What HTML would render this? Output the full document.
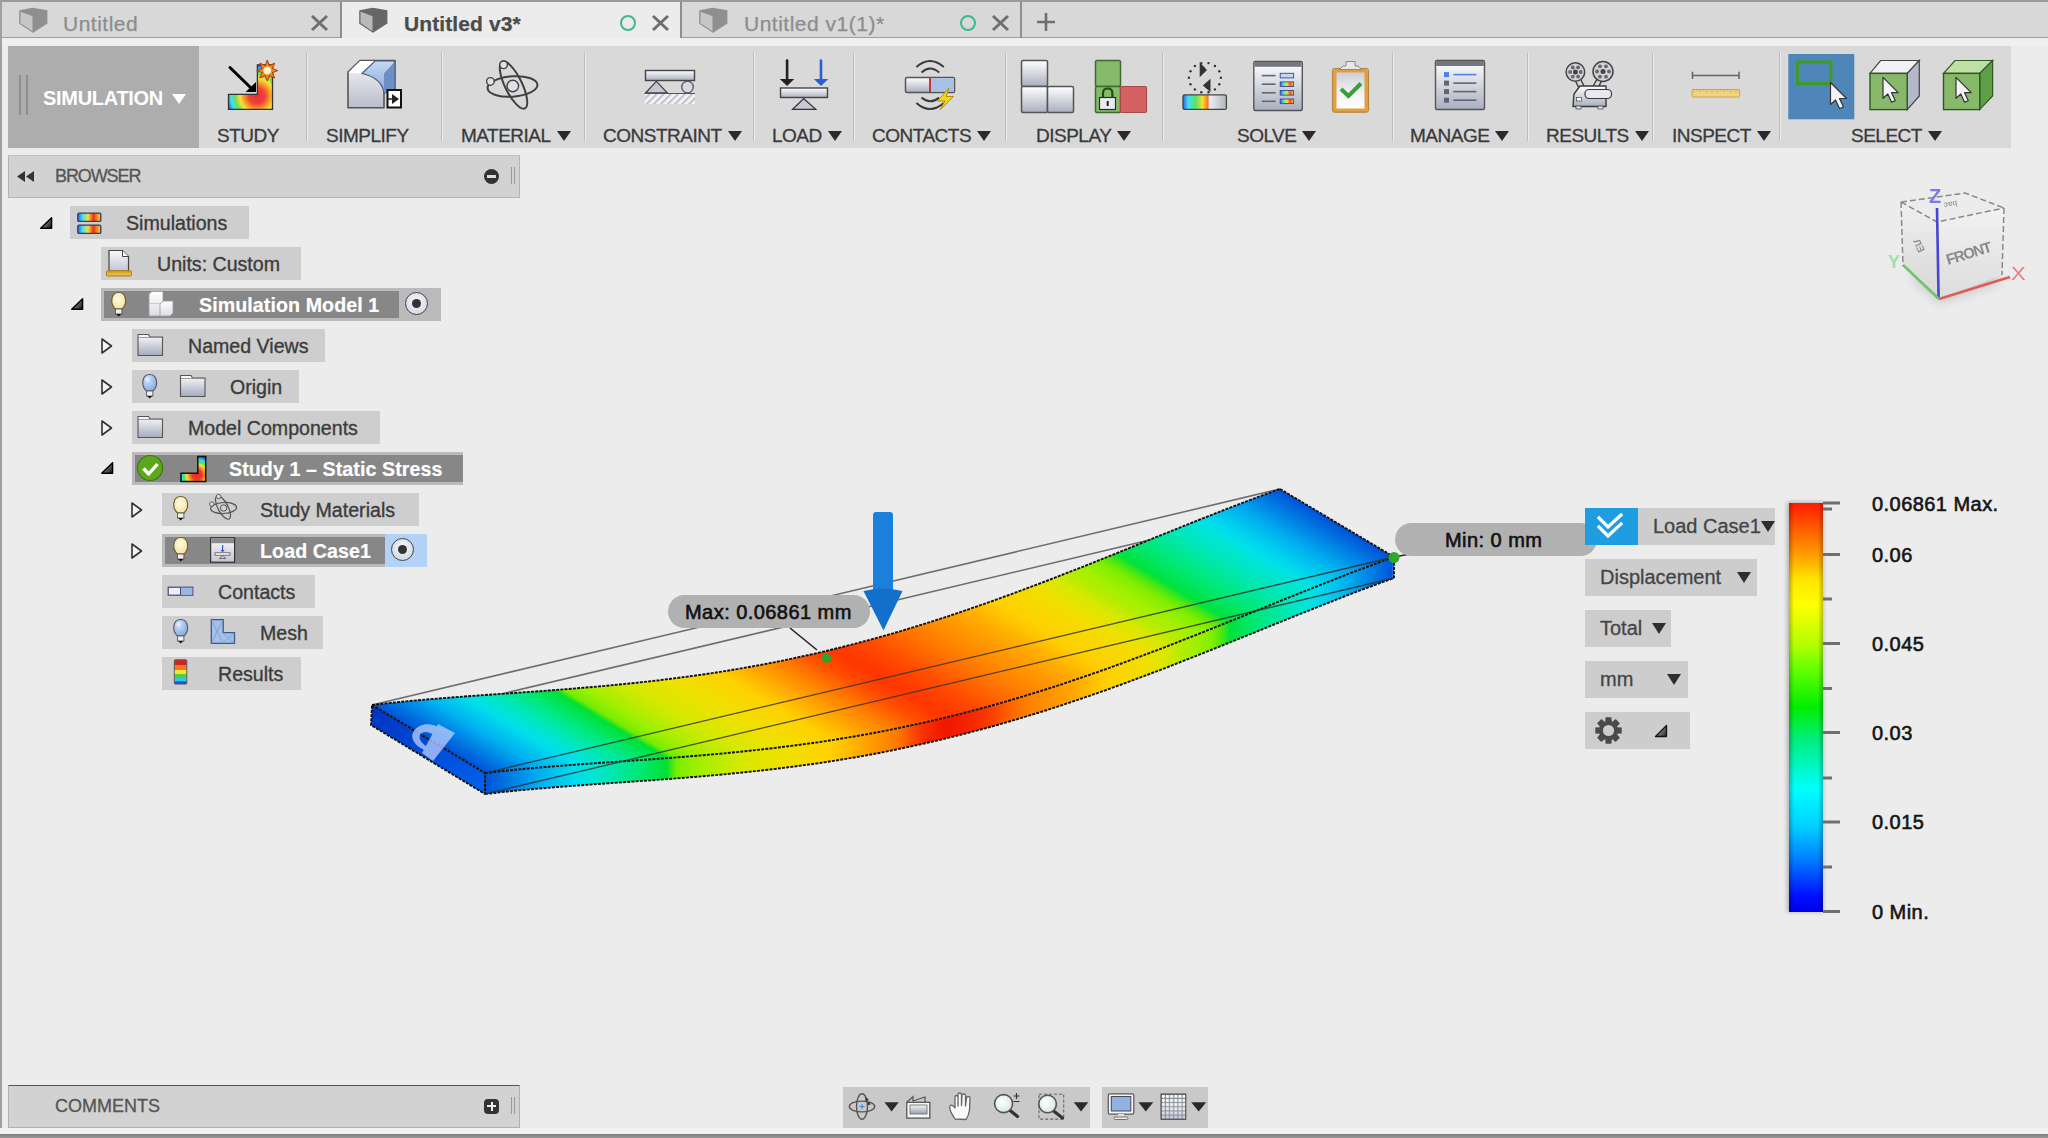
<!DOCTYPE html>
<html><head><meta charset="utf-8"><title>Fusion</title>
<style>
*{margin:0;padding:0;box-sizing:border-box}
html,body{width:2048px;height:1138px;overflow:hidden;background:#ececec;font-family:"Liberation Sans",sans-serif;position:relative}
.a{position:absolute}
svg{position:absolute;overflow:visible}

.tab{position:absolute;top:2px;height:36px;background:#d8d8d8;border-bottom:1px solid #9d9d9d}
.tabt{position:absolute;top:12px;font-size:21px;line-height:24px;color:#8d8d8d;letter-spacing:0.5px;white-space:nowrap;-webkit-text-stroke:0.25px currentColor}
.tl{position:absolute;top:119px;font-size:19px;color:#3a3a3a;white-space:nowrap;letter-spacing:-0.5px;line-height:34px;-webkit-text-stroke:0.3px #3a3a3a}
.sep{position:absolute;top:53px;width:2px;height:88px;background:linear-gradient(90deg,#bcbcbc 50%,#ececec 50%)}
.dd{display:inline-block;width:0;height:0;border-left:7px solid transparent;border-right:7px solid transparent;border-top:10px solid #2a2a2a;margin-left:6px;vertical-align:1px}


.row{position:absolute;height:33px;background:#cecece}
.rt{position:absolute;font-size:19.6px;color:#3c3c3c;white-space:nowrap;line-height:24px;-webkit-text-stroke:0.35px #3c3c3c}
.sel{background:#bababa}
.seli{position:absolute;top:3px;left:3px;height:27px;background:#878787}
.wt{color:#fff;font-weight:bold;-webkit-text-stroke:0.2px #fff;letter-spacing:0.1px}


.btn{position:absolute;background:#cdcdcd;height:37px}
.bt{position:absolute;font-size:20px;color:#454545;white-space:nowrap;line-height:24px;-webkit-text-stroke:0.3px #454545}
.tri{position:absolute;width:0;height:0;border-left:7px solid transparent;border-right:7px solid transparent;border-top:11px solid #2e2e2e}
.lg{position:absolute;font-size:20px;font-weight:normal;color:#151515;white-space:nowrap;line-height:24px;letter-spacing:0.45px;-webkit-text-stroke:0.6px #151515}

</style></head><body>
<div class="a" style="left:0;top:0;width:2048px;height:2px;background:#9a9a9a"></div>
<div class="a" style="left:0;top:2px;width:2048px;height:36px;background:#d8d8d8;border-bottom:1px solid #9d9d9d"></div>
<div class="a" style="left:0;top:0;width:2px;height:1138px;background:#a0a0a0"></div>
<div class="a" style="left:342px;top:2px;width:338px;height:36px;background:#ececec"></div>
<div class="a" style="left:340px;top:2px;width:2px;height:36px;background:#8e8e8e"></div>
<div class="a" style="left:680px;top:2px;width:2px;height:36px;background:#8e8e8e"></div>
<div class="a" style="left:1020px;top:2px;width:2px;height:36px;background:#8e8e8e"></div>
<div class="tabt" style="left:63px">Untitled</div>
<div class="tabt" style="left:404px;color:#4b4b4b;font-weight:bold;letter-spacing:0.1px">Untitled v3*</div>
<div class="tabt" style="left:744px">Untitled v1(1)*</div>
<div class="a" style="left:2px;top:38px;width:2046px;height:8px;background:#efefef"></div>
<div class="a" style="left:8px;top:46px;width:2003px;height:102px;background:#d9d9d9"></div>
<div class="a" style="left:8px;top:46px;width:191px;height:102px;background:#adadad"></div>
<div class="a" style="left:19px;top:75px;width:2px;height:40px;background:#8e8e8e"></div>
<div class="a" style="left:26px;top:75px;width:2px;height:40px;background:#8e8e8e"></div>
<div class="a" style="left:43px;top:81px;font-size:20px;font-weight:bold;color:#fff;letter-spacing:-0.3px;line-height:34px">SIMULATION</div><div class="a" style="left:172px;top:94px;width:0;height:0;border-left:7.5px solid transparent;border-right:7.5px solid transparent;border-top:10px solid #fff"></div>
<div class="tl" style="left:217px">STUDY</div>
<div class="tl" style="left:326px">SIMPLIFY</div>
<div class="tl" style="left:461px">MATERIAL<span class="dd"></span></div>
<div class="tl" style="left:603px">CONSTRAINT<span class="dd"></span></div>
<div class="tl" style="left:772px">LOAD<span class="dd"></span></div>
<div class="tl" style="left:872px">CONTACTS<span class="dd"></span></div>
<div class="tl" style="left:1036px">DISPLAY<span class="dd"></span></div>
<div class="tl" style="left:1237px">SOLVE<span class="dd"></span></div>
<div class="tl" style="left:1410px">MANAGE<span class="dd"></span></div>
<div class="tl" style="left:1546px">RESULTS<span class="dd"></span></div>
<div class="tl" style="left:1672px">INSPECT<span class="dd"></span></div>
<div class="tl" style="left:1851px">SELECT<span class="dd"></span></div>
<div class="sep" style="left:306px"></div>
<div class="sep" style="left:441px"></div>
<div class="sep" style="left:584px"></div>
<div class="sep" style="left:753px"></div>
<div class="sep" style="left:853px"></div>
<div class="sep" style="left:1005px"></div>
<div class="sep" style="left:1162px"></div>
<div class="sep" style="left:1392px"></div>
<div class="sep" style="left:1527px"></div>
<div class="sep" style="left:1652px"></div>
<div class="sep" style="left:1779px"></div>
<svg style="left:0;top:0" width="1100" height="40"><polygon points="19.4,10.3 32.7,7.7 47.4,10.3 47.4,23.4 33.0,32.7 19.4,23.7" fill="#8f8f8f"/><polygon points="20.0,11.0 33.0,15.8 33.0,32.0 20.0,23.4" fill="#c6c6c6" stroke="#8f8f8f" stroke-width="1"/></svg>
<svg style="left:0;top:0" width="1100" height="40"><polygon points="359.4,10.3 372.7,7.7 387.4,10.3 387.4,23.4 373.0,32.7 359.4,23.7" fill="#666"/><polygon points="360.0,11.0 373.0,15.8 373.0,32.0 360.0,23.4" fill="#b9b9b9" stroke="#666" stroke-width="1"/></svg>
<svg style="left:0;top:0" width="1100" height="40"><polygon points="699.4,10.3 712.7,7.7 727.4,10.3 727.4,23.4 713.0,32.7 699.4,23.7" fill="#8f8f8f"/><polygon points="700.0,11.0 713.0,15.8 713.0,32.0 700.0,23.4" fill="#c6c6c6" stroke="#8f8f8f" stroke-width="1"/></svg>
<svg style="left:310px;top:14px" width="20" height="18"><path d="M2 2 L17 16 M17 2 L2 16" stroke="#6f6f6f" stroke-width="3"/></svg>
<svg style="left:651px;top:14px" width="20" height="18"><path d="M2 2 L17 16 M17 2 L2 16" stroke="#6f6f6f" stroke-width="3"/></svg>
<svg style="left:991px;top:14px" width="20" height="18"><path d="M2 2 L17 16 M17 2 L2 16" stroke="#6f6f6f" stroke-width="3"/></svg>
<div class="a" style="left:620px;top:15px;width:16px;height:16px;border-radius:50%;border:2px solid #3cb88e"></div>
<div class="a" style="left:960px;top:15px;width:16px;height:16px;border-radius:50%;border:2px solid #3cb88e"></div>
<svg style="left:1036px;top:12px" width="20" height="20"><path d="M10 1 V19 M1 10 H19" stroke="#6f6f6f" stroke-width="2.6"/></svg>
<div class="a" style="left:8px;top:155px;width:512px;height:43px;background:#d2d2d2;border:1px solid #b4b4b4;border-top-color:#c0c0c0"></div>
<div class="a" style="left:55px;top:164px;font-size:18px;color:#555;letter-spacing:-1.1px;line-height:24px;-webkit-text-stroke:0.3px #555">BROWSER</div>
<svg style="left:17px;top:171px" width="18" height="11"><path d="M0 5.5 L8 0 L8 11 Z M9 5.5 L17 0 L17 11Z" fill="#333"/></svg>
<div class="a" style="left:484px;top:169px;width:15px;height:15px;border-radius:50%;background:#333"></div><div class="a" style="left:487px;top:175px;width:9px;height:3px;background:#ddd"></div>
<div class="a" style="left:511px;top:167px;width:1px;height:17px;background:#999"></div><div class="a" style="left:514px;top:167px;width:1px;height:17px;background:#999"></div>
<div class="row" style="left:70px;top:206px;width:179px"></div>
<div class="rt" style="left:126px;top:211px">Simulations</div>
<div class="row" style="left:101px;top:247px;width:200px"></div>
<div class="rt" style="left:157px;top:252px">Units: Custom</div>
<div class="row sel" style="left:101px;top:288px;width:340px"><div class="seli" style="width:295px"></div></div>
<div class="rt wt" style="left:199px;top:293px">Simulation Model 1</div>
<div class="row" style="left:132px;top:329px;width:193px"></div>
<div class="rt" style="left:188px;top:334px">Named Views</div>
<div class="row" style="left:132px;top:370px;width:167px"></div>
<div class="rt" style="left:230px;top:375px">Origin</div>
<div class="row" style="left:132px;top:411px;width:248px"></div>
<div class="rt" style="left:188px;top:416px">Model Components</div>
<div class="row sel" style="left:132px;top:452px;width:331px"><div class="seli" style="width:328px"></div></div>
<div class="rt wt" style="left:229px;top:457px">Study 1 &#8211; Static Stress</div>
<div class="row" style="left:162px;top:493px;width:257px"></div>
<div class="rt" style="left:260px;top:498px">Study Materials</div>
<div class="row sel" style="left:162px;top:534px;width:265px"><div class="seli" style="width:220px"></div></div>
<div class="rt wt" style="left:260px;top:539px">Load Case1</div>
<div class="row" style="left:162px;top:575px;width:153px"></div>
<div class="rt" style="left:218px;top:580px">Contacts</div>
<div class="row" style="left:162px;top:616px;width:161px"></div>
<div class="rt" style="left:260px;top:621px">Mesh</div>
<div class="row" style="left:162px;top:657px;width:139px"></div>
<div class="rt" style="left:218px;top:662px">Results</div>
<div class="a" style="left:385px;top:534px;width:42px;height:33px;background:#b2d3f7"></div>
<svg style="left:40px;top:217px" width="13" height="12"><defs><linearGradient id="tg40217" x1="0" y1="0.3" x2="1" y2="1"><stop offset="0" stop-color="#aaa"/><stop offset="1" stop-color="#111"/></linearGradient></defs><path d="M11.6 0.7 L11.6 11.3 L0.7 11.3 Z" fill="url(#tg40217)" stroke="#000" stroke-width="1.4" stroke-linejoin="round"/></svg>
<svg style="left:71px;top:298px" width="13" height="12"><defs><linearGradient id="tg71298" x1="0" y1="0.3" x2="1" y2="1"><stop offset="0" stop-color="#aaa"/><stop offset="1" stop-color="#111"/></linearGradient></defs><path d="M11.6 0.7 L11.6 11.3 L0.7 11.3 Z" fill="url(#tg71298)" stroke="#000" stroke-width="1.4" stroke-linejoin="round"/></svg>
<svg style="left:101px;top:462px" width="13" height="12"><defs><linearGradient id="tg101462" x1="0" y1="0.3" x2="1" y2="1"><stop offset="0" stop-color="#aaa"/><stop offset="1" stop-color="#111"/></linearGradient></defs><path d="M11.6 0.7 L11.6 11.3 L0.7 11.3 Z" fill="url(#tg101462)" stroke="#000" stroke-width="1.4" stroke-linejoin="round"/></svg>
<svg style="left:101px;top:338px" width="12" height="16"><path d="M1 1 L10.5 8 L1 15 Z" fill="#f4f4f4" stroke="#333" stroke-width="1.6" stroke-linejoin="round"/></svg>
<svg style="left:101px;top:379px" width="12" height="16"><path d="M1 1 L10.5 8 L1 15 Z" fill="#f4f4f4" stroke="#333" stroke-width="1.6" stroke-linejoin="round"/></svg>
<svg style="left:101px;top:420px" width="12" height="16"><path d="M1 1 L10.5 8 L1 15 Z" fill="#f4f4f4" stroke="#333" stroke-width="1.6" stroke-linejoin="round"/></svg>
<svg style="left:131px;top:502px" width="12" height="16"><path d="M1 1 L10.5 8 L1 15 Z" fill="#f4f4f4" stroke="#333" stroke-width="1.6" stroke-linejoin="round"/></svg>
<svg style="left:131px;top:543px" width="12" height="16"><path d="M1 1 L10.5 8 L1 15 Z" fill="#f4f4f4" stroke="#333" stroke-width="1.6" stroke-linejoin="round"/></svg>
<div class="a" style="left:405px;top:292px;width:23px;height:23px;border-radius:50%;border:1.5px solid #444;background:radial-gradient(circle at 50% 40%,#fafafa,#c9cde0)"></div>
<div class="a" style="left:412px;top:299px;width:9px;height:9px;border-radius:50%;background:#333"></div>
<div class="a" style="left:391px;top:538px;width:23px;height:23px;border-radius:50%;border:1.5px solid #444;background:radial-gradient(circle at 50% 40%,#fafafa,#c9cde0)"></div>
<div class="a" style="left:398px;top:545px;width:9px;height:9px;border-radius:50%;background:#333"></div>
<div class="a" style="left:8px;top:1085px;width:512px;height:43px;background:#d2d2d2;border:1px solid #b0b0b0;border-top:1px solid #555"></div>
<div class="a" style="left:55px;top:1094px;font-size:18px;color:#555;letter-spacing:0px;line-height:24px;-webkit-text-stroke:0.3px #555">COMMENTS</div>
<div class="a" style="left:484px;top:1099px;width:15px;height:15px;border-radius:4px;background:#333"></div><div class="a" style="left:487px;top:1105px;width:9px;height:2px;background:#eee"></div><div class="a" style="left:490.5px;top:1101.5px;width:2px;height:9px;background:#eee"></div>
<div class="a" style="left:511px;top:1097px;width:1px;height:17px;background:#999"></div><div class="a" style="left:514px;top:1097px;width:1px;height:17px;background:#999"></div>
<div class="a" style="left:0;top:1128px;width:2048px;height:7px;background:#f2f2f2"></div>
<div class="a" style="left:0;top:1134px;width:2048px;height:4px;background:linear-gradient(#7b7b7b,#9a9a9a)"></div>
<svg style="left:0;top:0" width="2048" height="1138" viewBox="0 0 2048 1138"><defs><linearGradient id="gt" gradientUnits="userSpaceOnUse" x1="372.0" y1="705.0" x2="708.8" y2="145.3"><stop offset="0.0000" stop-color="rgb(0,80,216)"/><stop offset="0.0085" stop-color="rgb(0,96,220)"/><stop offset="0.0170" stop-color="rgb(0,112,224)"/><stop offset="0.0254" stop-color="rgb(0,127,228)"/><stop offset="0.0337" stop-color="rgb(0,143,232)"/><stop offset="0.0420" stop-color="rgb(0,159,236)"/><stop offset="0.0502" stop-color="rgb(0,175,240)"/><stop offset="0.0584" stop-color="rgb(0,187,239)"/><stop offset="0.0665" stop-color="rgb(0,199,238)"/><stop offset="0.0746" stop-color="rgb(0,210,237)"/><stop offset="0.0827" stop-color="rgb(0,222,236)"/><stop offset="0.0907" stop-color="rgb(0,226,224)"/><stop offset="0.0987" stop-color="rgb(0,229,209)"/><stop offset="0.1067" stop-color="rgb(0,231,195)"/><stop offset="0.1147" stop-color="rgb(0,232,176)"/><stop offset="0.1227" stop-color="rgb(0,232,156)"/><stop offset="0.1307" stop-color="rgb(0,232,137)"/><stop offset="0.1387" stop-color="rgb(0,232,117)"/><stop offset="0.1467" stop-color="rgb(0,230,95)"/><stop offset="0.1548" stop-color="rgb(0,227,73)"/><stop offset="0.1628" stop-color="rgb(0,224,50)"/><stop offset="0.1709" stop-color="rgb(117,236,0)"/><stop offset="0.1790" stop-color="rgb(135,238,0)"/><stop offset="0.1871" stop-color="rgb(153,239,0)"/><stop offset="0.1953" stop-color="rgb(167,239,0)"/><stop offset="0.2035" stop-color="rgb(178,237,0)"/><stop offset="0.2118" stop-color="rgb(190,236,0)"/><stop offset="0.2201" stop-color="rgb(201,234,0)"/><stop offset="0.2284" stop-color="rgb(212,233,0)"/><stop offset="0.2368" stop-color="rgb(219,231,0)"/><stop offset="0.2453" stop-color="rgb(224,229,0)"/><stop offset="0.2538" stop-color="rgb(229,228,0)"/><stop offset="0.2623" stop-color="rgb(234,226,0)"/><stop offset="0.2710" stop-color="rgb(239,224,0)"/><stop offset="0.2797" stop-color="rgb(242,222,0)"/><stop offset="0.2884" stop-color="rgb(245,218,0)"/><stop offset="0.2973" stop-color="rgb(248,215,0)"/><stop offset="0.3062" stop-color="rgb(251,212,0)"/><stop offset="0.3152" stop-color="rgb(254,209,0)"/><stop offset="0.3242" stop-color="rgb(255,198,0)"/><stop offset="0.3334" stop-color="rgb(255,186,0)"/><stop offset="0.3426" stop-color="rgb(255,174,0)"/><stop offset="0.3519" stop-color="rgb(255,162,0)"/><stop offset="0.3612" stop-color="rgb(255,150,0)"/><stop offset="0.3707" stop-color="rgb(255,138,0)"/><stop offset="0.3802" stop-color="rgb(255,125,0)"/><stop offset="0.3899" stop-color="rgb(255,110,0)"/><stop offset="0.3996" stop-color="rgb(255,95,0)"/><stop offset="0.4093" stop-color="rgb(255,79,0)"/><stop offset="0.4192" stop-color="rgb(255,69,0)"/><stop offset="0.4292" stop-color="rgb(255,59,0)"/><stop offset="0.4392" stop-color="rgb(255,54,0)"/><stop offset="0.4493" stop-color="rgb(255,60,0)"/><stop offset="0.4596" stop-color="rgb(255,66,0)"/><stop offset="0.4699" stop-color="rgb(255,72,0)"/><stop offset="0.4802" stop-color="rgb(255,80,0)"/><stop offset="0.4907" stop-color="rgb(255,90,0)"/><stop offset="0.5012" stop-color="rgb(255,100,0)"/><stop offset="0.5119" stop-color="rgb(255,110,0)"/><stop offset="0.5226" stop-color="rgb(255,120,0)"/><stop offset="0.5334" stop-color="rgb(255,129,0)"/><stop offset="0.5442" stop-color="rgb(255,137,0)"/><stop offset="0.5552" stop-color="rgb(255,145,0)"/><stop offset="0.5662" stop-color="rgb(255,153,0)"/><stop offset="0.5773" stop-color="rgb(255,161,0)"/><stop offset="0.5884" stop-color="rgb(255,170,0)"/><stop offset="0.5997" stop-color="rgb(255,181,0)"/><stop offset="0.6110" stop-color="rgb(255,193,0)"/><stop offset="0.6223" stop-color="rgb(255,205,0)"/><stop offset="0.6338" stop-color="rgb(253,210,0)"/><stop offset="0.6453" stop-color="rgb(250,213,0)"/><stop offset="0.6568" stop-color="rgb(247,217,0)"/><stop offset="0.6684" stop-color="rgb(244,220,0)"/><stop offset="0.6801" stop-color="rgb(237,225,0)"/><stop offset="0.6918" stop-color="rgb(226,229,0)"/><stop offset="0.7035" stop-color="rgb(216,232,0)"/><stop offset="0.7153" stop-color="rgb(192,235,0)"/><stop offset="0.7271" stop-color="rgb(175,238,0)"/><stop offset="0.7390" stop-color="rgb(163,240,0)"/><stop offset="0.7509" stop-color="rgb(146,239,0)"/><stop offset="0.7628" stop-color="rgb(127,237,0)"/><stop offset="0.7748" stop-color="rgb(75,232,16)"/><stop offset="0.7867" stop-color="rgb(0,226,60)"/><stop offset="0.7987" stop-color="rgb(0,228,82)"/><stop offset="0.8107" stop-color="rgb(0,231,103)"/><stop offset="0.8227" stop-color="rgb(0,232,123)"/><stop offset="0.8347" stop-color="rgb(0,232,142)"/><stop offset="0.8467" stop-color="rgb(0,232,161)"/><stop offset="0.8587" stop-color="rgb(0,232,179)"/><stop offset="0.8707" stop-color="rgb(0,231,197)"/><stop offset="0.8827" stop-color="rgb(0,229,210)"/><stop offset="0.8946" stop-color="rgb(0,226,228)"/><stop offset="0.9065" stop-color="rgb(0,217,237)"/><stop offset="0.9184" stop-color="rgb(0,203,238)"/><stop offset="0.9302" stop-color="rgb(0,189,239)"/><stop offset="0.9420" stop-color="rgb(0,174,240)"/><stop offset="0.9537" stop-color="rgb(0,155,235)"/><stop offset="0.9654" stop-color="rgb(0,136,230)"/><stop offset="0.9770" stop-color="rgb(0,118,225)"/><stop offset="0.9885" stop-color="rgb(0,99,221)"/><stop offset="1.0000" stop-color="rgb(0,80,216)"/></linearGradient><linearGradient id="gf" gradientUnits="userSpaceOnUse" x1="485" y1="0" x2="1394" y2="0"><stop offset="0.0000" stop-color="rgb(0,80,216)"/><stop offset="0.0100" stop-color="rgb(0,96,220)"/><stop offset="0.0200" stop-color="rgb(0,112,224)"/><stop offset="0.0300" stop-color="rgb(0,127,228)"/><stop offset="0.0400" stop-color="rgb(0,143,232)"/><stop offset="0.0500" stop-color="rgb(0,159,236)"/><stop offset="0.0600" stop-color="rgb(0,175,240)"/><stop offset="0.0700" stop-color="rgb(0,187,239)"/><stop offset="0.0800" stop-color="rgb(0,199,238)"/><stop offset="0.0900" stop-color="rgb(0,210,237)"/><stop offset="0.1000" stop-color="rgb(0,222,236)"/><stop offset="0.1100" stop-color="rgb(0,226,224)"/><stop offset="0.1200" stop-color="rgb(0,229,209)"/><stop offset="0.1300" stop-color="rgb(0,231,195)"/><stop offset="0.1400" stop-color="rgb(0,232,176)"/><stop offset="0.1500" stop-color="rgb(0,232,156)"/><stop offset="0.1600" stop-color="rgb(0,232,137)"/><stop offset="0.1700" stop-color="rgb(0,232,117)"/><stop offset="0.1800" stop-color="rgb(0,230,95)"/><stop offset="0.1900" stop-color="rgb(0,227,73)"/><stop offset="0.2000" stop-color="rgb(0,224,50)"/><stop offset="0.2100" stop-color="rgb(117,236,0)"/><stop offset="0.2200" stop-color="rgb(135,238,0)"/><stop offset="0.2300" stop-color="rgb(153,239,0)"/><stop offset="0.2400" stop-color="rgb(167,239,0)"/><stop offset="0.2500" stop-color="rgb(178,237,0)"/><stop offset="0.2600" stop-color="rgb(190,236,0)"/><stop offset="0.2700" stop-color="rgb(201,234,0)"/><stop offset="0.2800" stop-color="rgb(212,233,0)"/><stop offset="0.2900" stop-color="rgb(219,231,0)"/><stop offset="0.3000" stop-color="rgb(224,229,0)"/><stop offset="0.3100" stop-color="rgb(229,228,0)"/><stop offset="0.3200" stop-color="rgb(234,226,0)"/><stop offset="0.3300" stop-color="rgb(239,224,0)"/><stop offset="0.3400" stop-color="rgb(242,222,0)"/><stop offset="0.3500" stop-color="rgb(245,218,0)"/><stop offset="0.3600" stop-color="rgb(248,215,0)"/><stop offset="0.3700" stop-color="rgb(251,212,0)"/><stop offset="0.3800" stop-color="rgb(254,209,0)"/><stop offset="0.3900" stop-color="rgb(255,198,0)"/><stop offset="0.4000" stop-color="rgb(255,186,0)"/><stop offset="0.4100" stop-color="rgb(255,174,0)"/><stop offset="0.4200" stop-color="rgb(255,162,0)"/><stop offset="0.4300" stop-color="rgb(255,150,0)"/><stop offset="0.4400" stop-color="rgb(255,138,0)"/><stop offset="0.4500" stop-color="rgb(255,125,0)"/><stop offset="0.4600" stop-color="rgb(254,104,0)"/><stop offset="0.4700" stop-color="rgb(251,76,0)"/><stop offset="0.4800" stop-color="rgb(248,53,0)"/><stop offset="0.4900" stop-color="rgb(245,39,0)"/><stop offset="0.5000" stop-color="rgb(242,29,0)"/><stop offset="0.5100" stop-color="rgb(240,24,0)"/><stop offset="0.5200" stop-color="rgb(242,29,0)"/><stop offset="0.5300" stop-color="rgb(244,36,0)"/><stop offset="0.5400" stop-color="rgb(246,44,0)"/><stop offset="0.5500" stop-color="rgb(248,54,0)"/><stop offset="0.5600" stop-color="rgb(250,68,0)"/><stop offset="0.5700" stop-color="rgb(252,85,0)"/><stop offset="0.5800" stop-color="rgb(253,104,0)"/><stop offset="0.5900" stop-color="rgb(255,120,0)"/><stop offset="0.6000" stop-color="rgb(255,129,0)"/><stop offset="0.6100" stop-color="rgb(255,137,0)"/><stop offset="0.6200" stop-color="rgb(255,145,0)"/><stop offset="0.6300" stop-color="rgb(255,153,0)"/><stop offset="0.6400" stop-color="rgb(255,161,0)"/><stop offset="0.6500" stop-color="rgb(255,170,0)"/><stop offset="0.6600" stop-color="rgb(255,181,0)"/><stop offset="0.6700" stop-color="rgb(255,193,0)"/><stop offset="0.6800" stop-color="rgb(255,205,0)"/><stop offset="0.6900" stop-color="rgb(253,210,0)"/><stop offset="0.7000" stop-color="rgb(250,213,0)"/><stop offset="0.7100" stop-color="rgb(247,217,0)"/><stop offset="0.7200" stop-color="rgb(244,220,0)"/><stop offset="0.7300" stop-color="rgb(237,225,0)"/><stop offset="0.7400" stop-color="rgb(226,229,0)"/><stop offset="0.7500" stop-color="rgb(216,232,0)"/><stop offset="0.7600" stop-color="rgb(192,235,0)"/><stop offset="0.7700" stop-color="rgb(175,238,0)"/><stop offset="0.7800" stop-color="rgb(163,240,0)"/><stop offset="0.7900" stop-color="rgb(146,239,0)"/><stop offset="0.8000" stop-color="rgb(127,237,0)"/><stop offset="0.8100" stop-color="rgb(75,232,16)"/><stop offset="0.8200" stop-color="rgb(0,226,60)"/><stop offset="0.8300" stop-color="rgb(0,228,82)"/><stop offset="0.8400" stop-color="rgb(0,231,103)"/><stop offset="0.8500" stop-color="rgb(0,232,123)"/><stop offset="0.8600" stop-color="rgb(0,232,142)"/><stop offset="0.8700" stop-color="rgb(0,232,161)"/><stop offset="0.8800" stop-color="rgb(0,232,179)"/><stop offset="0.8900" stop-color="rgb(0,231,197)"/><stop offset="0.9000" stop-color="rgb(0,229,210)"/><stop offset="0.9100" stop-color="rgb(0,226,228)"/><stop offset="0.9200" stop-color="rgb(0,217,237)"/><stop offset="0.9300" stop-color="rgb(0,203,238)"/><stop offset="0.9400" stop-color="rgb(0,189,239)"/><stop offset="0.9500" stop-color="rgb(0,174,240)"/><stop offset="0.9600" stop-color="rgb(0,155,235)"/><stop offset="0.9700" stop-color="rgb(0,136,230)"/><stop offset="0.9800" stop-color="rgb(0,118,225)"/><stop offset="0.9900" stop-color="rgb(0,99,221)"/><stop offset="1.0000" stop-color="rgb(0,80,216)"/></linearGradient><linearGradient id="gl" x1="0" y1="0" x2="1" y2="1"><stop offset="0" stop-color="#0034c0"/><stop offset="1" stop-color="#0062ee"/></linearGradient></defs><g stroke="#6e6e6e" stroke-width="1.6" fill="none"><path d="M372,705 L1280,489"/><path d="M371,725 L1280,509"/></g><polygon points="372.0,705.0 387.1,703.3 402.3,701.7 417.4,700.3 432.5,699.0 447.7,697.8 462.8,696.6 477.9,695.5 493.1,694.4 508.2,693.4 523.3,692.3 538.5,691.3 553.6,690.1 568.7,689.0 583.9,687.7 599.0,686.4 614.1,685.0 629.3,683.5 644.4,681.9 659.5,680.2 674.7,678.3 689.8,676.3 704.9,674.2 720.1,671.9 735.2,669.4 750.3,666.8 765.5,664.0 780.6,661.0 795.7,657.8 810.9,654.5 826.0,651.0 841.1,647.3 856.3,643.4 871.4,639.4 886.5,635.2 901.7,630.8 916.8,626.2 931.9,621.5 947.1,616.6 962.2,611.5 977.3,606.3 992.5,601.0 1007.6,595.5 1022.7,589.9 1037.9,584.2 1053.0,578.4 1068.1,572.5 1083.3,566.6 1098.4,560.5 1113.5,554.5 1128.7,548.3 1143.8,542.2 1158.9,536.0 1174.1,529.9 1189.2,523.8 1204.3,517.8 1219.5,511.8 1234.6,505.9 1249.7,500.1 1264.9,494.5 1280.0,489.0 1394.0,557.0 1378.8,562.5 1363.7,568.1 1348.5,573.9 1333.4,579.8 1318.2,585.8 1303.1,591.8 1287.9,597.9 1272.8,604.0 1257.7,610.2 1242.5,616.3 1227.3,622.5 1212.2,628.5 1197.0,634.6 1181.9,640.5 1166.8,646.4 1151.6,652.2 1136.5,657.9 1121.3,663.5 1106.2,669.0 1091.0,674.3 1075.8,679.5 1060.7,684.6 1045.6,689.5 1030.4,694.2 1015.2,698.8 1000.1,703.2 985.0,707.4 969.8,711.4 954.7,715.3 939.5,719.0 924.4,722.5 909.2,725.8 894.0,729.0 878.9,732.0 863.8,734.8 848.6,737.4 833.5,739.9 818.3,742.2 803.1,744.3 788.0,746.3 772.8,748.2 757.7,749.9 742.5,751.5 727.4,753.0 712.2,754.4 697.1,755.7 682.0,757.0 666.8,758.1 651.6,759.3 636.5,760.3 621.4,761.4 606.2,762.4 591.0,763.5 575.9,764.6 560.8,765.8 545.6,767.0 530.5,768.3 515.3,769.7 500.1,771.3 485.0,773.0" fill="url(#gt)"/><polygon points="485.0,773.0 500.1,771.3 515.3,769.7 530.5,768.3 545.6,767.0 560.8,765.8 575.9,764.6 591.0,763.5 606.2,762.4 621.4,761.4 636.5,760.3 651.6,759.3 666.8,758.1 682.0,757.0 697.1,755.7 712.2,754.4 727.4,753.0 742.5,751.5 757.7,749.9 772.8,748.2 788.0,746.3 803.1,744.3 818.3,742.2 833.5,739.9 848.6,737.4 863.8,734.8 878.9,732.0 894.0,729.0 909.2,725.8 924.4,722.5 939.5,719.0 954.7,715.3 969.8,711.4 985.0,707.4 1000.1,703.2 1015.2,698.8 1030.4,694.2 1045.6,689.5 1060.7,684.6 1075.8,679.5 1091.0,674.3 1106.2,669.0 1121.3,663.5 1136.5,657.9 1151.6,652.2 1166.8,646.4 1181.9,640.5 1197.0,634.6 1212.2,628.5 1227.3,622.5 1242.5,616.3 1257.7,610.2 1272.8,604.0 1287.9,597.9 1303.1,591.8 1318.2,585.8 1333.4,579.8 1348.5,573.9 1363.7,568.1 1378.8,562.5 1394.0,557.0 1394.0,578.0 1378.8,583.5 1363.7,589.1 1348.5,594.9 1333.4,600.8 1318.2,606.8 1303.1,612.8 1287.9,618.9 1272.8,625.0 1257.7,631.2 1242.5,637.3 1227.3,643.5 1212.2,649.5 1197.0,655.6 1181.9,661.5 1166.8,667.4 1151.6,673.2 1136.5,678.9 1121.3,684.5 1106.2,690.0 1091.0,695.3 1075.8,700.5 1060.7,705.6 1045.6,710.5 1030.4,715.2 1015.2,719.8 1000.1,724.2 985.0,728.4 969.8,732.4 954.7,736.3 939.5,740.0 924.4,743.5 909.2,746.8 894.0,750.0 878.9,753.0 863.8,755.8 848.6,758.4 833.5,760.9 818.3,763.2 803.1,765.3 788.0,767.3 772.8,769.2 757.7,770.9 742.5,772.5 727.4,774.0 712.2,775.4 697.1,776.7 682.0,778.0 666.8,779.1 651.6,780.3 636.5,781.3 621.4,782.4 606.2,783.4 591.0,784.5 575.9,785.6 560.8,786.8 545.6,788.0 530.5,789.3 515.3,790.7 500.1,792.3 485.0,794.0" fill="url(#gf)"/><polygon points="372.0,705.0 485.0,773.0 485.0,794.0 371.0,725.0" fill="url(#gl)"/><polygon points="1394,557 1394,578 1392,578 1392,557" fill="#1b6fe0"/><g stroke="#111" stroke-width="1.9" fill="none" stroke-dasharray="3 1.2" stroke-linejoin="round"><polyline points="372.0,705.0 387.1,703.3 402.3,701.7 417.4,700.3 432.5,699.0 447.7,697.8 462.8,696.6 477.9,695.5 493.1,694.4 508.2,693.4 523.3,692.3 538.5,691.3 553.6,690.1 568.7,689.0 583.9,687.7 599.0,686.4 614.1,685.0 629.3,683.5 644.4,681.9 659.5,680.2 674.7,678.3 689.8,676.3 704.9,674.2 720.1,671.9 735.2,669.4 750.3,666.8 765.5,664.0 780.6,661.0 795.7,657.8 810.9,654.5 826.0,651.0 841.1,647.3 856.3,643.4 871.4,639.4 886.5,635.2 901.7,630.8 916.8,626.2 931.9,621.5 947.1,616.6 962.2,611.5 977.3,606.3 992.5,601.0 1007.6,595.5 1022.7,589.9 1037.9,584.2 1053.0,578.4 1068.1,572.5 1083.3,566.6 1098.4,560.5 1113.5,554.5 1128.7,548.3 1143.8,542.2 1158.9,536.0 1174.1,529.9 1189.2,523.8 1204.3,517.8 1219.5,511.8 1234.6,505.9 1249.7,500.1 1264.9,494.5 1280.0,489.0"/><polyline points="485.0,773.0 500.1,771.3 515.3,769.7 530.5,768.3 545.6,767.0 560.8,765.8 575.9,764.6 591.0,763.5 606.2,762.4 621.4,761.4 636.5,760.3 651.6,759.3 666.8,758.1 682.0,757.0 697.1,755.7 712.2,754.4 727.4,753.0 742.5,751.5 757.7,749.9 772.8,748.2 788.0,746.3 803.1,744.3 818.3,742.2 833.5,739.9 848.6,737.4 863.8,734.8 878.9,732.0 894.0,729.0 909.2,725.8 924.4,722.5 939.5,719.0 954.7,715.3 969.8,711.4 985.0,707.4 1000.1,703.2 1015.2,698.8 1030.4,694.2 1045.6,689.5 1060.7,684.6 1075.8,679.5 1091.0,674.3 1106.2,669.0 1121.3,663.5 1136.5,657.9 1151.6,652.2 1166.8,646.4 1181.9,640.5 1197.0,634.6 1212.2,628.5 1227.3,622.5 1242.5,616.3 1257.7,610.2 1272.8,604.0 1287.9,597.9 1303.1,591.8 1318.2,585.8 1333.4,579.8 1348.5,573.9 1363.7,568.1 1378.8,562.5 1394.0,557.0"/><polyline points="485.0,794.0 500.1,792.3 515.3,790.7 530.5,789.3 545.6,788.0 560.8,786.8 575.9,785.6 591.0,784.5 606.2,783.4 621.4,782.4 636.5,781.3 651.6,780.3 666.8,779.1 682.0,778.0 697.1,776.7 712.2,775.4 727.4,774.0 742.5,772.5 757.7,770.9 772.8,769.2 788.0,767.3 803.1,765.3 818.3,763.2 833.5,760.9 848.6,758.4 863.8,755.8 878.9,753.0 894.0,750.0 909.2,746.8 924.4,743.5 939.5,740.0 954.7,736.3 969.8,732.4 985.0,728.4 1000.1,724.2 1015.2,719.8 1030.4,715.2 1045.6,710.5 1060.7,705.6 1075.8,700.5 1091.0,695.3 1106.2,690.0 1121.3,684.5 1136.5,678.9 1151.6,673.2 1166.8,667.4 1181.9,661.5 1197.0,655.6 1212.2,649.5 1227.3,643.5 1242.5,637.3 1257.7,631.2 1272.8,625.0 1287.9,618.9 1303.1,612.8 1318.2,606.8 1333.4,600.8 1348.5,594.9 1363.7,589.1 1378.8,583.5 1394.0,578.0"/><polyline points="372,705 485,773 485,794 371,725 372,705"/><polyline points="1280,489 1394,557 1394,578"/></g><g opacity="0.72"><path d="M438,724 L455,733 L433,761 L422,753 Z" fill="#c4d4ff"/><path d="M430,752 C415,748 409,738 414,731 C419,723 431,722 440,728 L434,735 C428,731 422,731 420,735 C418,739 423,745 428,747 Z" fill="#c4d4ff"/></g><g stroke="#333" stroke-width="1.3" fill="none" opacity="0.85"><path d="M485,773 L1394,557"/><path d="M485,794 L1394,578"/></g><rect x="873" y="512" width="20" height="82" rx="3" fill="#1a80dc"/><path d="M863.5,591 Q883,586 902.5,591 L883.5,630.5 Z" fill="#126fcb"/><path d="M790,628 L817,650" stroke="#222" stroke-width="1.6"/><circle cx="826.5" cy="658" r="5" fill="#3f9a2a"/><path d="M1394,557 L1410,554" stroke="#222" stroke-width="1.6"/><circle cx="1394" cy="557.5" r="5.5" fill="#2fa82a"/></svg>
<div class="a" style="left:668px;top:595px;width:202px;height:33px;border-radius:17px;background:#b1b1b1"></div>
<div class="a" style="left:685px;top:600px;font-size:20px;font-weight:normal;-webkit-text-stroke:0.6px #111;color:#111;line-height:24px;white-space:nowrap;letter-spacing:0.45px">Max: 0.06861 mm</div>
<div class="a" style="left:1395px;top:523px;width:202px;height:33px;border-radius:17px;background:#b1b1b1"></div>
<div class="a" style="left:1445px;top:528px;font-size:20px;font-weight:normal;-webkit-text-stroke:0.6px #111;color:#111;line-height:24px;white-space:nowrap;letter-spacing:0.45px">Min: 0 mm</div>
<div class="btn" style="left:1637px;top:508px;width:138px"></div>
<div class="a" style="left:1585px;top:508px;width:53px;height:37px;background:#1e9de0"></div>
<svg style="left:1595px;top:512px" width="32" height="30"><path d="M4 6 L13 15 L26 3 M4 15 L13 24 L26 12" stroke="#fff" stroke-width="3.2" fill="none" stroke-linecap="square"/></svg>
<div class="bt" style="left:1653px;top:514px">Load Case1</div><div class="tri" style="left:1761px;top:521px"></div>
<div class="btn" style="left:1585px;top:559px;width:172px"></div><div class="bt" style="left:1600px;top:565px">Displacement</div><div class="tri" style="left:1737px;top:572px"></div>
<div class="btn" style="left:1585px;top:610px;width:86px"></div><div class="bt" style="left:1600px;top:616px">Total</div><div class="tri" style="left:1652px;top:623px"></div>
<div class="btn" style="left:1585px;top:661px;width:103px"></div><div class="bt" style="left:1600px;top:667px">mm</div><div class="tri" style="left:1667px;top:674px"></div>
<div class="btn" style="left:1585px;top:712px;width:105px"></div>
<svg style="left:0;top:0" width="2048" height="1138"><polygon points="1621.7,727.6 1621.7,733.4 1617.4,733.8 1617.2,734.4 1619.9,737.7 1615.7,741.9 1612.4,739.2 1611.8,739.4 1611.4,743.7 1605.6,743.7 1605.2,739.4 1604.6,739.2 1601.3,741.9 1597.1,737.7 1599.8,734.4 1599.6,733.8 1595.3,733.4 1595.3,727.6 1599.6,727.2 1599.8,726.6 1597.1,723.3 1601.3,719.1 1604.6,721.8 1605.2,721.6 1605.6,717.3 1611.4,717.3 1611.8,721.6 1612.4,721.8 1615.7,719.1 1619.9,723.3 1617.2,726.6 1617.4,727.2" fill="#4a4a4a"/><circle cx="1608.5" cy="730.5" r="5.6" fill="#cdcdcd"/><defs><linearGradient id="gtri" x1="0" y1="0.3" x2="1" y2="1"><stop offset="0" stop-color="#bbb"/><stop offset="1" stop-color="#222"/></linearGradient></defs><path d="M1666.5,725.5 L1666.5,736.5 L1655.5,736.5 Z" fill="url(#gtri)" stroke="#111" stroke-width="1.3" stroke-linejoin="round"/></svg>
<svg style="left:1780px;top:495px" width="70" height="425"><defs><linearGradient id="lgd" x1="0" y1="0" x2="0" y2="1"><stop offset="0" stop-color="#ff1a00"/><stop offset="0.06" stop-color="#ff5a00"/><stop offset="0.13" stop-color="#ffa000"/><stop offset="0.19" stop-color="#ffe800"/><stop offset="0.25" stop-color="#ffff00"/><stop offset="0.35" stop-color="#b0ff00"/><stop offset="0.41" stop-color="#60ff00"/><stop offset="0.50" stop-color="#00ee00"/><stop offset="0.58" stop-color="#00ee80"/><stop offset="0.70" stop-color="#00ffff"/><stop offset="0.79" stop-color="#00d0ff"/><stop offset="0.87" stop-color="#0080ff"/><stop offset="0.96" stop-color="#0010ff"/><stop offset="1" stop-color="#0000e8"/></linearGradient><linearGradient id="lsh" x1="0" y1="0" x2="1" y2="0"><stop offset="0" stop-color="#000" stop-opacity="0.25"/><stop offset="0.15" stop-color="#000" stop-opacity="0"/><stop offset="0.85" stop-color="#000" stop-opacity="0"/><stop offset="1" stop-color="#000" stop-opacity="0.25"/></linearGradient><filter id="lbl" x="-30%" y="-5%" width="160%" height="110%"><feGaussianBlur stdDeviation="2"/></filter></defs><rect x="7" y="7" width="36" height="410" fill="#000" opacity="0.25" filter="url(#lbl)"/><rect x="9" y="8" width="34" height="409" fill="url(#lgd)"/><rect x="9" y="8" width="34" height="409" fill="url(#lsh)"/><rect x="43" y="6.5" width="17" height="3" fill="#6f6f6f"/><rect x="43" y="58.0" width="17" height="3" fill="#6f6f6f"/><rect x="43" y="147.0" width="17" height="3" fill="#6f6f6f"/><rect x="43" y="236.0" width="17" height="3" fill="#6f6f6f"/><rect x="43" y="325.5" width="17" height="3" fill="#6f6f6f"/><rect x="43" y="415.0" width="17" height="3" fill="#6f6f6f"/><rect x="43" y="12.5" width="9" height="3" fill="#6f6f6f"/><rect x="43" y="102.5" width="9" height="3" fill="#6f6f6f"/><rect x="43" y="192.0" width="9" height="3" fill="#6f6f6f"/><rect x="43" y="281.5" width="9" height="3" fill="#6f6f6f"/><rect x="43" y="370.5" width="9" height="3" fill="#6f6f6f"/></svg>
<div class="lg" style="left:1872px;top:492px">0.06861 Max.</div>
<div class="lg" style="left:1872px;top:543px">0.06</div>
<div class="lg" style="left:1872px;top:632px">0.045</div>
<div class="lg" style="left:1872px;top:721px">0.03</div>
<div class="lg" style="left:1872px;top:810px">0.015</div>
<div class="lg" style="left:1872px;top:900px">0 Min.</div>
<svg style="left:1870px;top:170px;filter:blur(0.6px)" width="170" height="150" viewBox="1870 170 170 150">
<defs>
<linearGradient id="cf" x1="0" y1="0" x2="0" y2="1"><stop offset="0" stop-color="#f2f2f2"/><stop offset="1" stop-color="#dcdcdc"/></linearGradient>
<linearGradient id="cl" x1="0" y1="0" x2="0" y2="1"><stop offset="0" stop-color="#f0f0f0"/><stop offset="1" stop-color="#d6d6d6"/></linearGradient>
<filter id="cbl" x="-50%" y="-50%" width="200%" height="200%"><feGaussianBlur stdDeviation="6"/></filter>
</defs>
<polygon points="1910,275 1939,302 2000,282 1990,265" fill="#000" opacity="0.18" filter="url(#cbl)"/>
<polygon points="1901,202 1937,222 1939,299 1903,266" fill="url(#cl)"/>
<polygon points="1937,222 2004,208 2002,275 1939,299" fill="url(#cf)"/>
<polygon points="1901,202 1965,193 2004,208 1937,222" fill="#ececec"/>
<g stroke="#8a8a8a" stroke-width="1.5" fill="none" stroke-dasharray="6 3">
<polyline points="1901,202 1965,193 2004,208"/>
<polyline points="1901,202 1937,222 2004,208"/>
<polyline points="1901,202 1903,266"/>
<polyline points="2004,208 2002,275"/>
</g>
<line x1="1937" y1="208" x2="1938.6" y2="299" stroke="#4646d0" stroke-width="2.6"/>
<line x1="1939" y1="299" x2="2010" y2="277" stroke="#e05a5a" stroke-width="2.6"/>
<line x1="1939" y1="299" x2="1903" y2="265" stroke="#6cc46c" stroke-width="2.6"/>
<text x="1929" y="203" font-family="Liberation Sans" font-weight="bold" font-size="20" fill="#7a7af0">Z</text>
<text x="2011" y="282" font-family="Liberation Sans" font-size="22" fill="#f07a7a" transform="scale(1,0.85) translate(0,48)">X</text>
<text x="1888" y="268" font-family="Liberation Sans" font-weight="bold" font-size="18" fill="#a0e0a0">Y</text>
<text x="0" y="0" font-family="Liberation Sans" font-weight="bold" font-size="15" fill="#8a8a8a" textLength="47" transform="translate(1948,265) rotate(-17)">FRONT</text>
<text x="0" y="0" font-family="Liberation Sans" font-weight="bold" font-size="10" fill="#909090" transform="translate(1913,241) rotate(65)">&#1051;Ǝ</text><text x="0" y="0" font-family="Liberation Sans" font-weight="bold" font-size="8" fill="#a0a0a0" transform="translate(1944,207) rotate(-10)">ɔɐq</text>
</svg>
<div class="a" style="left:843px;top:1087px;width:247px;height:41px;background:#c9c9c9"></div>
<div class="a" style="left:1102px;top:1087px;width:106px;height:41px;background:#c9c9c9"></div>
<svg style="left:0;top:0" width="2048" height="160" viewBox="0 0 2048 160"><defs>
<linearGradient id="gw" x1="0" y1="0" x2="0" y2="1"><stop offset="0" stop-color="#ffffff"/><stop offset="1" stop-color="#a9afbf"/></linearGradient>
<linearGradient id="gw2" x1="0" y1="0" x2="0" y2="1"><stop offset="0" stop-color="#f6f6f8"/><stop offset="1" stop-color="#b8bdca"/></linearGradient>
<radialGradient id="gstudy" gradientUnits="userSpaceOnUse" cx="257" cy="96" r="31"><stop offset="0" stop-color="#e83030"/><stop offset="0.25" stop-color="#ee4040"/><stop offset="0.4" stop-color="#f89020"/><stop offset="0.55" stop-color="#f8e040"/><stop offset="0.7" stop-color="#70e050"/><stop offset="0.84" stop-color="#40e0f0"/><stop offset="1" stop-color="#3050e0"/></radialGradient>
<linearGradient id="grain" x1="0" y1="0" x2="1" y2="0"><stop offset="0" stop-color="#3060e0"/><stop offset="0.12" stop-color="#40e0f0"/><stop offset="0.3" stop-color="#60e060"/><stop offset="0.45" stop-color="#f8e030"/><stop offset="0.58" stop-color="#f87020"/><stop offset="0.6" stop-color="#f0f0f2"/><stop offset="1" stop-color="#b0b5c0"/></linearGradient>
<linearGradient id="grain2" x1="0" y1="0" x2="1" y2="0"><stop offset="0" stop-color="#3060e0"/><stop offset="0.25" stop-color="#40e0f0"/><stop offset="0.5" stop-color="#f8e030"/><stop offset="0.75" stop-color="#f85020"/><stop offset="1" stop-color="#f8d030"/></linearGradient>
<linearGradient id="gblue" x1="0" y1="0" x2="0" y2="1"><stop offset="0" stop-color="#c4daf4"/><stop offset="1" stop-color="#88a8d8"/></linearGradient>
<linearGradient id="gclip" x1="0" y1="0" x2="0" y2="1"><stop offset="0" stop-color="#c8ccd6"/><stop offset="0.6" stop-color="#f4f4f6"/><stop offset="1" stop-color="#ffffff"/></linearGradient>
<pattern id="hatch" width="5" height="5" patternUnits="userSpaceOnUse" patternTransform="rotate(45)"><rect width="5" height="5" fill="#f2f2f6"/><rect width="1.6" height="5" fill="#b4b8c4"/></pattern>
</defs><path d="M228.5,94.3 L257.4,94.3 L257.4,64.8 L272.5,64.8 L272.5,109.3 L228.5,109.3 Z" fill="url(#gstudy)" stroke="#333" stroke-width="1.3"/><path d="M230,67.5 L250,87" stroke="#000" stroke-width="3" stroke-linecap="round"/><path d="M245.5,92 L256,92 L256,82 Z" fill="#000"/><polygon points="267.3,60.1 269.4,65.5 274.7,63.2 272.4,68.5 277.8,70.6 272.4,72.7 274.7,78.0 269.4,75.7 267.3,81.1 265.2,75.7 259.9,78.0 262.2,72.7 256.8,70.6 262.2,68.5 259.9,63.2 265.2,65.5" fill="#f08a10" stroke="#c03000" stroke-width="1"/><circle cx="267.3" cy="70.6" r="3.8" fill="#fff8d0"/><path d="M348,72 L360,60.5 L395,60.5 L395,89.5 L384,93 L384,107.8 L348,107.8 Z" fill="url(#gw2)" stroke="#555" stroke-width="1.6" stroke-linejoin="round"/><path d="M348.5,72.5 L360,61 L375,61 L362,73.5 Z" fill="#fff"/><path d="M362,73.5 L375,61 L394.5,61 L394.5,89 L384,93 Q382,78 362,73.5 Z" fill="url(#gblue)" stroke="#4a5a78" stroke-width="1.2"/><path d="M384,73.5 L394.5,62 L394.5,89 L384,93 Z" fill="#6d8fc6"/><rect x="387.5" y="90" width="13.5" height="17.5" fill="#fff" stroke="#111" stroke-width="2"/><path d="M392,94 L399,99 L392,104 Z" fill="#222"/><path d="M388,99 L393,99" stroke="#222" stroke-width="1.5"/><g fill="none" stroke="#404040" stroke-width="2"><ellipse cx="512.5" cy="86.5" rx="25" ry="10.2" transform="rotate(-4 512.5 86.5)"/><ellipse cx="513.5" cy="85" rx="26" ry="8.5" transform="rotate(64 513.5 85)"/></g><circle cx="512.8" cy="86" r="5.8" fill="#dfe0ea" stroke="#444" stroke-width="1.4"/><circle cx="503.6" cy="64.8" r="3.8" fill="#dfe0ea" stroke="#444" stroke-width="1.4"/><circle cx="490.4" cy="81.4" r="3.8" fill="#dfe0ea" stroke="#444" stroke-width="1.4"/><rect x="645.5" y="70.5" width="49" height="10" fill="url(#gw)" stroke="#444" stroke-width="1.4"/><path d="M645.5,93 L656.4,81.4 L667.5,93 Z" fill="#c4c6d0" stroke="#444" stroke-width="1.3"/><circle cx="687.5" cy="87" r="5.8" fill="#d8d8e2" stroke="#555" stroke-width="1.3"/><rect x="645" y="93" width="50" height="11" fill="url(#hatch)"/><path d="M645,93.5 L695,93.5" stroke="#555" stroke-width="1.2"/><path d="M787.1,60.5 L787.1,80" stroke="#222" stroke-width="2.6" stroke-linecap="round"/><path d="M779.8,79 L794.2,79 L787.1,86 Z" fill="#222"/><path d="M821,60.5 L821,80" stroke="#2a5fd0" stroke-width="2.6" stroke-linecap="round"/><path d="M813.9,79 L828.3,79 L821,86 Z" fill="#2a5fd0"/><rect x="780.5" y="88" width="47" height="9.5" fill="url(#gw)" stroke="#444" stroke-width="1.4"/><path d="M792.7,109.3 L803.7,98.6 L815.7,109.3 Z" fill="#c8c8d4" stroke="#333" stroke-width="1.3"/><rect x="905.5" y="77.5" width="49" height="15" rx="1.5" fill="url(#gw)" stroke="#555" stroke-width="1.5"/><rect x="930" y="78.3" width="24" height="13.4" fill="#a6c0e6"/><path d="M930,78 L930,92" stroke="#d03030" stroke-width="2"/><g fill="none" stroke="#3a3a3a" stroke-width="2"><path d="M916.4,67 Q930,55 943.8,67"/><path d="M921.5,72.4 Q930,64.5 939.2,72.4"/><path d="M921.5,97.6 Q930,105 939.2,97.6"/><path d="M916.4,103 Q930,115 943.8,103"/></g><path d="M949,88 L937.5,101 L945,101 L940,110 L953.5,96.5 L946,96.5 Z" fill="#f0d820" stroke="#b89000" stroke-width="1"/><g stroke="#555" stroke-width="1.5" fill="url(#gw)"><rect x="1021.5" y="60.5" width="26" height="26" rx="1.5"/><rect x="1021.5" y="86.5" width="26" height="26" rx="1.5"/><rect x="1047.5" y="86.5" width="26" height="26" rx="1.5"/></g><g stroke="#3f6a30" stroke-width="1.5"><rect x="1095.5" y="60.5" width="25" height="26" rx="1.5" fill="#88ba6c"/><rect x="1095.5" y="86.5" width="25" height="26" rx="1.5" fill="#88ba6c"/></g><rect x="1120.5" y="86.5" width="26" height="26" rx="1.5" fill="#d46262" stroke="#a84848" stroke-width="1.2"/><path d="M1103,97 L1103,93 Q1103,88.5 1107.7,88.5 Q1112.4,88.5 1112.4,93 L1112.4,97" fill="none" stroke="#1e5010" stroke-width="2.2"/><rect x="1099.5" y="97.5" width="16" height="12" fill="#eaeaf2" stroke="#1e3a10" stroke-width="1.2"/><path d="M1107.7,101 L1107.7,106" stroke="#222" stroke-width="2"/><circle cx="1220.9" cy="77.7" r="1.2" fill="#333"/><circle cx="1219.3" cy="84.2" r="1.2" fill="#333"/><circle cx="1214.9" cy="89.4" r="1.2" fill="#333"/><circle cx="1208.5" cy="92.3" r="1.2" fill="#333"/><circle cx="1201.3" cy="92.3" r="1.2" fill="#333"/><circle cx="1194.9" cy="89.4" r="1.2" fill="#333"/><circle cx="1190.5" cy="84.2" r="1.2" fill="#333"/><circle cx="1188.9" cy="77.7" r="1.2" fill="#333"/><circle cx="1190.5" cy="71.2" r="1.2" fill="#333"/><circle cx="1194.9" cy="66.0" r="1.2" fill="#333"/><circle cx="1201.3" cy="63.1" r="1.2" fill="#333"/><circle cx="1208.5" cy="63.1" r="1.2" fill="#333"/><circle cx="1214.9" cy="66.0" r="1.2" fill="#333"/><circle cx="1219.3" cy="71.2" r="1.2" fill="#333"/><path d="M1199.7,62.3 L1199.7,77.2 L1207,70 Z" fill="#333"/><path d="M1210.5,78.7 L1210.5,92 L1202.8,85.4 Z" fill="#333"/><rect x="1183" y="94.8" width="43.4" height="14.6" rx="1.5" fill="url(#grain)" stroke="#444" stroke-width="1.3"/><rect x="1253.8" y="61.5" width="48.5" height="49" rx="1.5" fill="url(#gw)" stroke="#555" stroke-width="1.4"/><rect x="1254.5" y="62" width="47" height="4.8" fill="#737880"/><path d="M1261.8,75.6 L1275.6,75.6" stroke="#666" stroke-width="1.6"/><rect x="1280.2" y="73.3" width="13.4" height="4.6" fill="#c0d8f0" stroke="#3a4a90" stroke-width="0.9"/><path d="M1261.8,84.2 L1275.6,84.2" stroke="#666" stroke-width="1.6"/><rect x="1280.2" y="81.9" width="13.4" height="4.6" fill="url(#grain2)" stroke="#3a4a90" stroke-width="0.9"/><path d="M1261.8,92.8 L1275.6,92.8" stroke="#666" stroke-width="1.6"/><rect x="1280.2" y="90.5" width="13.4" height="4.6" fill="url(#grain2)" stroke="#3a4a90" stroke-width="0.9"/><path d="M1261.8,101.3 L1275.6,101.3" stroke="#666" stroke-width="1.6"/><rect x="1280.2" y="99.0" width="13.4" height="4.6" fill="url(#grain2)" stroke="#3a4a90" stroke-width="0.9"/><rect x="1334.5" y="70.5" width="32" height="40" rx="1.5" fill="url(#gclip)" stroke="#e0a040" stroke-width="4"/><rect x="1332.4" y="68.4" width="36.2" height="43.8" rx="2" fill="none" stroke="#a87028" stroke-width="0.8"/><path d="M1339.5,69.5 L1343,66 L1346,66 L1346,61.5 L1355,61.5 L1355,66 L1358,66 L1361.5,69.5 Z" fill="#e8e8ee" stroke="#888" stroke-width="1"/><path d="M1341,89 L1348.4,96 L1361,83.5" stroke="#38a038" stroke-width="4" fill="none"/><rect x="1435.5" y="60.5" width="49" height="49" rx="1.5" fill="url(#gw)" stroke="#555" stroke-width="1.4"/><rect x="1436.2" y="61" width="47.6" height="5" fill="#737880"/><rect x="1444" y="72.1" width="5" height="5" fill="#4f80f0"/><path d="M1453.3,74.6 L1476.4,74.6" stroke="#4f80f0" stroke-width="1.6"/><rect x="1444" y="80.6" width="5" height="5" fill="#60656f"/><path d="M1453.3,83.1 L1476.4,83.1" stroke="#60656f" stroke-width="1.6"/><rect x="1444" y="89.1" width="5" height="5" fill="#60656f"/><path d="M1453.3,91.6 L1476.4,91.6" stroke="#60656f" stroke-width="1.6"/><rect x="1444" y="97.7" width="5" height="5" fill="#60656f"/><path d="M1453.3,100.2 L1476.4,100.2" stroke="#60656f" stroke-width="1.6"/><g stroke="#3a3a3a" stroke-width="1.4"><path d="M1572,74 L1580,90 M1578,74 L1585,88 M1600,74 L1592,88 M1605,74 L1598,88" fill="none"/></g><circle cx="1575.4" cy="72" r="9.3" fill="#d0d2d8" stroke="#444" stroke-width="1.5"/><circle cx="1575.4" cy="72" r="2.5" fill="#444"/><circle cx="1580.7" cy="72.0" r="1.9" fill="#666"/><circle cx="1578.1" cy="76.6" r="1.9" fill="#666"/><circle cx="1572.8" cy="76.6" r="1.9" fill="#666"/><circle cx="1570.1" cy="72.0" r="1.9" fill="#666"/><circle cx="1572.8" cy="67.4" r="1.9" fill="#666"/><circle cx="1578.1" cy="67.4" r="1.9" fill="#666"/><circle cx="1603" cy="71.5" r="10" fill="#d0d2d8" stroke="#444" stroke-width="1.5"/><circle cx="1603" cy="71.5" r="2.5" fill="#444"/><circle cx="1609.0" cy="71.5" r="1.9" fill="#666"/><circle cx="1606.0" cy="76.7" r="1.9" fill="#666"/><circle cx="1600.0" cy="76.7" r="1.9" fill="#666"/><circle cx="1597.0" cy="71.5" r="1.9" fill="#666"/><circle cx="1600.0" cy="66.3" r="1.9" fill="#666"/><circle cx="1606.0" cy="66.3" r="1.9" fill="#666"/><path d="M1574,94 L1580,86 L1606,86 L1606,106.5 L1573,106.5 Z" fill="url(#gw)" stroke="#3a3a3a" stroke-width="1.4" stroke-linejoin="round"/><rect x="1585" y="89.5" width="26.5" height="9" rx="4" fill="#e8e8ee" stroke="#3a3a3a" stroke-width="1.2"/><rect x="1576.5" y="97.5" width="5" height="3.5" fill="#fff" stroke="#555" stroke-width="0.8"/><rect x="1576" y="106" width="5" height="3" fill="#ddd" stroke="#555" stroke-width="0.8"/><rect x="1598" y="106" width="5" height="3" fill="#ddd" stroke="#555" stroke-width="0.8"/><path d="M1692,75.5 L1739.6,75.5 M1692.5,71.8 L1692.5,79 M1739,71.8 L1739,79" stroke="#666" stroke-width="1.6"/><rect x="1692" y="89.5" width="47.6" height="7.5" rx="1" fill="#f2d37e" stroke="#caa452" stroke-width="1"/><path d="M1694.0,89.8 L1694.0,93" stroke="#c8a050" stroke-width="0.6"/><path d="M1697.0,89.8 L1697.0,91.5" stroke="#c8a050" stroke-width="0.6"/><path d="M1700.0,89.8 L1700.0,93" stroke="#c8a050" stroke-width="0.6"/><path d="M1703.0,89.8 L1703.0,91.5" stroke="#c8a050" stroke-width="0.6"/><path d="M1706.0,89.8 L1706.0,93" stroke="#c8a050" stroke-width="0.6"/><path d="M1709.0,89.8 L1709.0,91.5" stroke="#c8a050" stroke-width="0.6"/><path d="M1712.0,89.8 L1712.0,93" stroke="#c8a050" stroke-width="0.6"/><path d="M1715.0,89.8 L1715.0,91.5" stroke="#c8a050" stroke-width="0.6"/><path d="M1718.0,89.8 L1718.0,93" stroke="#c8a050" stroke-width="0.6"/><path d="M1721.0,89.8 L1721.0,91.5" stroke="#c8a050" stroke-width="0.6"/><path d="M1724.0,89.8 L1724.0,93" stroke="#c8a050" stroke-width="0.6"/><path d="M1727.0,89.8 L1727.0,91.5" stroke="#c8a050" stroke-width="0.6"/><path d="M1730.0,89.8 L1730.0,93" stroke="#c8a050" stroke-width="0.6"/><path d="M1733.0,89.8 L1733.0,91.5" stroke="#c8a050" stroke-width="0.6"/><path d="M1736.0,89.8 L1736.0,93" stroke="#c8a050" stroke-width="0.6"/><path d="M1739.0,89.8 L1739.0,91.5" stroke="#c8a050" stroke-width="0.6"/><rect x="1788.3" y="54" width="66" height="65.3" fill="#4f86b9"/><rect x="1797.5" y="62" width="33.5" height="21.5" fill="none" stroke="#3f9a2a" stroke-width="3"/><polygon points="1830.5,82.5 1830.5,104.5 1835.5,100.0 1839.5,108.5 1843.5,107.0 1839.5,98.5 1846.5,98.5" fill="#f4f4f8" stroke="#333" stroke-width="1.2" stroke-linejoin="round"/><path d="M1870,73.4 L1880.6,60.5 L1919.3,60.5 L1907.2,73.4 Z" fill="#f2f2f6" stroke="#444" stroke-width="1.2"/><path d="M1907.2,73.4 L1919.3,60.5 L1919.3,96 L1907.2,109.6 Z" fill="#b4b8c8" stroke="#444" stroke-width="1.2"/><rect x="1870" y="73.4" width="37.2" height="36.2" fill="#88b86a" stroke="#2e5a20" stroke-width="1.4"/><polygon points="1883.0,77.4 1883.0,98.3 1887.8,94.0 1891.5,102.1 1895.3,100.7 1891.5,92.6 1898.2,92.6" fill="#f4f4f8" stroke="#333" stroke-width="1.2" stroke-linejoin="round"/><path d="M1943.5,73.4 L1955,60.5 L1992.6,60.5 L1979.7,73.4 Z" fill="#bde0a4" stroke="#2e5a20" stroke-width="1.2"/><path d="M1979.7,73.4 L1992.6,60.5 L1992.6,96 L1979.7,109.6 Z" fill="#5f9e48" stroke="#2e5a20" stroke-width="1.2"/><rect x="1943.5" y="73.4" width="36.2" height="36.2" fill="#88b86a" stroke="#2e5a20" stroke-width="1.4"/><polygon points="1956.0,77.4 1956.0,98.3 1960.8,94.0 1964.5,102.1 1968.3,100.7 1964.5,92.6 1971.2,92.6" fill="#f4f4f8" stroke="#333" stroke-width="1.2" stroke-linejoin="round"/></svg>
<svg style="left:0;top:190px" width="520" height="520" viewBox="0 190 520 520"><defs>
<linearGradient id="tsim" x1="0" y1="0" x2="1" y2="0"><stop offset="0" stop-color="#3060e0"/><stop offset="0.2" stop-color="#40e0f0"/><stop offset="0.45" stop-color="#f0e040"/><stop offset="0.68" stop-color="#f03020"/><stop offset="0.85" stop-color="#f89020"/><stop offset="1" stop-color="#f8d040"/></linearGradient>
<linearGradient id="tdoc" x1="0" y1="0" x2="0" y2="1"><stop offset="0" stop-color="#fafafa"/><stop offset="1" stop-color="#c4c4d8"/></linearGradient>
<radialGradient id="tbulb" cx="0.45" cy="0.4" r="0.6"><stop offset="0" stop-color="#fffbe8"/><stop offset="1" stop-color="#f4e49c"/></radialGradient>
<radialGradient id="tbulbb" cx="0.35" cy="0.3" r="0.7"><stop offset="0" stop-color="#f0f8ff"/><stop offset="0.3" stop-color="#b8d4f4"/><stop offset="1" stop-color="#88aee0"/></radialGradient>
<linearGradient id="tfold" x1="0" y1="0" x2="0" y2="1"><stop offset="0" stop-color="#fbfbfc"/><stop offset="1" stop-color="#a4abbe"/></linearGradient>
<radialGradient id="tstudy" gradientUnits="userSpaceOnUse" cx="197" cy="475" r="19"><stop offset="0" stop-color="#e82828"/><stop offset="0.25" stop-color="#f03828"/><stop offset="0.4" stop-color="#f88a20"/><stop offset="0.55" stop-color="#f8e040"/><stop offset="0.68" stop-color="#60e050"/><stop offset="0.8" stop-color="#30e0f0"/><stop offset="1" stop-color="#2050e0"/></radialGradient>
<linearGradient id="tres" x1="0" y1="0" x2="0" y2="1"><stop offset="0" stop-color="#d82020"/><stop offset="0.2" stop-color="#d82020"/><stop offset="0.22" stop-color="#f07820"/><stop offset="0.4" stop-color="#f07820"/><stop offset="0.42" stop-color="#f8e030"/><stop offset="0.58" stop-color="#f8e030"/><stop offset="0.6" stop-color="#50d040"/><stop offset="0.74" stop-color="#50d040"/><stop offset="0.76" stop-color="#30c8e8"/><stop offset="0.88" stop-color="#30c8e8"/><stop offset="0.9" stop-color="#2050d8"/><stop offset="1" stop-color="#2050d8"/></linearGradient>
<linearGradient id="tcube" x1="0" y1="0" x2="0" y2="1"><stop offset="0" stop-color="#ffffff"/><stop offset="1" stop-color="#dcdce4"/></linearGradient>
</defs><rect x="77.8" y="213.1" width="23" height="8.3" rx="1.2" fill="url(#tsim)" stroke="#3a3a5a" stroke-width="1.3"/><rect x="77.8" y="225.1" width="23" height="8.3" rx="1.2" fill="url(#tsim)" stroke="#3a3a5a" stroke-width="1.3"/><path d="M109,250.5 L122.5,250.5 L128.5,256.5 L128.5,271 L109,271 Z" fill="url(#tdoc)" stroke="#444" stroke-width="1.2"/><path d="M122.5,250.5 L122.5,256.5 L128.5,256.5" fill="#fff" stroke="#444" stroke-width="1"/><rect x="106.5" y="270.8" width="25" height="5.2" rx="1" fill="#eab838" stroke="#b08020" stroke-width="1"/><path d="M108.5,271 L108.5,273" stroke="#a07010" stroke-width="0.6"/><path d="M111.1,271 L111.1,273" stroke="#a07010" stroke-width="0.6"/><path d="M113.7,271 L113.7,273" stroke="#a07010" stroke-width="0.6"/><path d="M116.3,271 L116.3,273" stroke="#a07010" stroke-width="0.6"/><path d="M118.9,271 L118.9,273" stroke="#a07010" stroke-width="0.6"/><path d="M121.5,271 L121.5,273" stroke="#a07010" stroke-width="0.6"/><path d="M124.1,271 L124.1,273" stroke="#a07010" stroke-width="0.6"/><path d="M126.7,271 L126.7,273" stroke="#a07010" stroke-width="0.6"/><path d="M129.3,271 L129.3,273" stroke="#a07010" stroke-width="0.6"/><path d="M115.5,309.0 C109.7,304.0 110.7,292.5 118.7,292.5 C126.7,292.5 127.7,304.0 121.9,309.0 L121.9,309.0 L115.5,309.0 Z" fill="url(#tbulb)" stroke="#6a5a30" stroke-width="1.1"/><rect x="115.5" y="309.0" width="6.4" height="5" fill="#f0f0f0" stroke="#555" stroke-width="0.9"/><path d="M116.2,314.0 L121.2,314.0 L118.7,316.5 Z" fill="#111"/><path d="M146.5,391.0 C140.7,386.0 141.7,374.5 149.7,374.5 C157.7,374.5 158.7,386.0 152.9,391.0 L152.9,391.0 L146.5,391.0 Z" fill="url(#tbulbb)" stroke="#556" stroke-width="1.1"/><rect x="146.5" y="391.0" width="6.4" height="5" fill="#f0f0f0" stroke="#555" stroke-width="0.9"/><path d="M147.2,396.0 L152.2,396.0 L149.7,398.5 Z" fill="#111"/><path d="M177.5,513.0 C171.7,508.0 172.7,496.5 180.7,496.5 C188.7,496.5 189.7,508.0 183.9,513.0 L183.9,513.0 L177.5,513.0 Z" fill="url(#tbulb)" stroke="#6a5a30" stroke-width="1.1"/><rect x="177.5" y="513.0" width="6.4" height="5" fill="#f0f0f0" stroke="#555" stroke-width="0.9"/><path d="M178.2,518.0 L183.2,518.0 L180.7,520.5 Z" fill="#111"/><path d="M177.5,554.0 C171.7,549.0 172.7,537.5 180.7,537.5 C188.7,537.5 189.7,549.0 183.9,554.0 L183.9,554.0 L177.5,554.0 Z" fill="url(#tbulb)" stroke="#6a5a30" stroke-width="1.1"/><rect x="177.5" y="554.0" width="6.4" height="5" fill="#f0f0f0" stroke="#555" stroke-width="0.9"/><path d="M178.2,559.0 L183.2,559.0 L180.7,561.5 Z" fill="#111"/><path d="M177.5,636.0 C171.7,631.0 172.7,619.5 180.7,619.5 C188.7,619.5 189.7,631.0 183.9,636.0 L183.9,636.0 L177.5,636.0 Z" fill="url(#tbulbb)" stroke="#556" stroke-width="1.1"/><rect x="177.5" y="636.0" width="6.4" height="5" fill="#f0f0f0" stroke="#555" stroke-width="0.9"/><path d="M178.2,641.0 L183.2,641.0 L180.7,643.5 Z" fill="#111"/><path d="M149,294 L152,291.5 L163,291.5 L163,316 L149,316 Z" fill="url(#tcube)" stroke="#9a9aa4" stroke-width="0.8"/><path d="M160,304 L163,301 L173,301 L173,313 L170,316 L160,316 Z" fill="url(#tcube)" stroke="#9a9aa4" stroke-width="0.8"/><path d="M149,303.5 L160,303.5" stroke="#c0c0c8" stroke-width="0.8"/><path d="M138.0,334.5 L148.5,334.5 L150.0,337.0 L162.5,337.0 L162.5,355.5 L138.0,355.5 Z" fill="url(#tfold)" stroke="#555" stroke-width="1.1"/><path d="M138.5,337.5 L162.0,337.5" stroke="#888" stroke-width="0.8"/><path d="M180.5,375.5 L191.0,375.5 L192.5,378.0 L205.0,378.0 L205.0,396.5 L180.5,396.5 Z" fill="url(#tfold)" stroke="#555" stroke-width="1.1"/><path d="M181.0,378.5 L204.5,378.5" stroke="#888" stroke-width="0.8"/><path d="M138.0,416.5 L148.5,416.5 L150.0,419.0 L162.5,419.0 L162.5,437.5 L138.0,437.5 Z" fill="url(#tfold)" stroke="#555" stroke-width="1.1"/><path d="M138.5,419.5 L162.0,419.5" stroke="#888" stroke-width="0.8"/><circle cx="150.1" cy="468" r="12.5" fill="#5ea61c" stroke="#3d7a0e" stroke-width="1.2"/><path d="M143.5,468.5 L148.7,474 L157.5,464" stroke="#fff" stroke-width="3.4" fill="none" stroke-linejoin="round"/><path d="M181,473.2 L197.8,473.2 L197.8,456.5 L205.7,456.5 L205.7,481.6 L181,481.6 Z" fill="url(#tstudy)" stroke="#111" stroke-width="1.5"/><g fill="none" stroke="#555" stroke-width="1.2"><ellipse cx="223.6" cy="508" rx="13" ry="5.5" transform="rotate(-3 223.6 508)"/><ellipse cx="223" cy="507.5" rx="13" ry="5" transform="rotate(62 223 507.5)"/></g><circle cx="223.6" cy="508" r="3.2" fill="#d0d0d8" stroke="#555" stroke-width="1"/><circle cx="218.6" cy="496.5" r="2.2" fill="#ddd" stroke="#555" stroke-width="0.9"/><circle cx="211.8" cy="504" r="2.2" fill="#ddd" stroke="#555" stroke-width="0.9"/><rect x="210.6" y="537.7" width="24" height="24.5" fill="url(#tdoc)" stroke="#333" stroke-width="1.2"/><rect x="211.2" y="538.2" width="22.8" height="5" fill="#8a8a90"/><path d="M222.6,545 L222.6,551" stroke="#2a5fd0" stroke-width="1.2"/><path d="M220.6,550 L224.6,550 L222.6,552.5 Z" fill="#2a5fd0"/><rect x="215" y="552.8" width="15" height="2.4" fill="#fff" stroke="#555" stroke-width="0.8"/><path d="M219.5,558.5 L222.6,555.2 L225.7,558.5 Z" fill="#ccc" stroke="#555" stroke-width="0.8"/><rect x="168.2" y="587.2" width="24.6" height="8" fill="#eef0f6" stroke="#3a4a80" stroke-width="1.2"/><rect x="180.5" y="587.8" width="11.8" height="6.8" fill="#98b8e0"/><path d="M180.5,587.2 L180.5,595.2" stroke="#3a4a80" stroke-width="1"/><path d="M211.3,619.7 L223.2,619.7 L223.2,632.6 L234.5,632.6 L234.5,643.4 L211.3,643.4 Z" fill="#a2c0e8" stroke="#3a5a90" stroke-width="1.3"/><g stroke="#7a9ad0" stroke-width="0.7"><path d="M211.5,620 L223,643 M223,620 L211.5,643 M223,632.8 L234.3,643.2 M234.3,632.8 L223,643.2"/></g><rect x="174.3" y="659.8" width="12.5" height="24.3" rx="1" fill="url(#tres)" stroke="#555" stroke-width="0.9"/></svg>
<svg style="left:840px;top:1085px" width="380" height="45" viewBox="840 1085 380 45"><defs>
<linearGradient id="ng" x1="0" y1="0" x2="0" y2="1"><stop offset="0" stop-color="#f4f4f6"/><stop offset="1" stop-color="#9aa0b0"/></linearGradient>
<radialGradient id="nlens" cx="0.4" cy="0.4" r="0.6"><stop offset="0" stop-color="#ffffff"/><stop offset="1" stop-color="#d8e8e8"/></radialGradient>
<pattern id="ngrid" width="4.15" height="4.15" patternUnits="userSpaceOnUse" x="1161" y="1094"><rect width="4.15" height="4.15" fill="#7a7f8a"/><rect x="0.9" y="0.9" width="3" height="3" fill="#fff"/></pattern>
<linearGradient id="ngridfade" x1="0" y1="0" x2="0" y2="1"><stop offset="0" stop-color="#fff" stop-opacity="0"/><stop offset="1" stop-color="#8890a8" stop-opacity="0.5"/></linearGradient>
</defs><g fill="none" stroke="#555" stroke-width="1.4"><ellipse cx="862" cy="1106.5" rx="12.7" ry="5.4"/><ellipse cx="862" cy="1106.5" rx="5.5" ry="12.7"/></g><path d="M866,1097 L869,1100 L865,1101 Z M868,1101.5 L871,1104.5 L867,1105 Z" fill="#333"/><path d="M862,1104 L862,1109 M859.5,1106.5 L864.5,1106.5" stroke="#3a8ad8" stroke-width="1"/><path d="M884.5,1102.2 L898.7,1102.2 L891.6,1111.6 Z" fill="#2a2a2a"/><path d="M907,1102 L913,1096.5 L913,1101 L925,1097 L925,1102" fill="none" stroke="#555" stroke-width="1.2"/><rect x="906.8" y="1102.3" width="23" height="15.8" fill="#f8f8fa" stroke="#555" stroke-width="1.3"/><rect x="910" y="1105" width="17" height="9" fill="url(#ng)" stroke="#666" stroke-width="0.8"/><path d="M955,1119 C951,1113 949,1108 950,1106 C951,1104.5 953,1105 955,1108 L955,1097 C955,1095 958,1095 958,1097 L958,1106 L958,1094.5 C958,1092.5 961.5,1092.5 961.5,1094.5 L961.5,1105.5 L962,1095.5 C962,1093.5 965.5,1093.5 965.5,1095.5 L965.5,1106 L966.5,1098 C966.5,1096 970,1096 970,1098 L969.5,1110 C969,1115 967,1118 966,1119.5 Z" fill="#fafafa" stroke="#666" stroke-width="1.3" stroke-linejoin="round"/><path d="M1009.5,1110 L1017.5,1116.5" stroke="#333" stroke-width="3.2" stroke-linecap="round"/><circle cx="1003.6" cy="1103.6" r="9" fill="url(#nlens)" stroke="#555" stroke-width="1.6"/><path d="M1013.5,1096 L1019.5,1096 M1016.5,1093 L1016.5,1099 M1013.5,1101.5 L1019.5,1101.5" stroke="#333" stroke-width="1.2"/><rect x="1039" y="1094.3" width="24.7" height="24.8" fill="none" stroke="#666" stroke-width="1.1" stroke-dasharray="3 2"/><path d="M1053,1110.5 L1062.5,1118" stroke="#333" stroke-width="3.2" stroke-linecap="round"/><circle cx="1047.6" cy="1104" r="8.8" fill="url(#nlens)" stroke="#555" stroke-width="1.6"/><path d="M1073.8,1102.2 L1088.3,1102.2 L1081.0,1111.6 Z" fill="#2a2a2a"/><rect x="1108.3" y="1093.8" width="25.5" height="20.4" rx="1.5" fill="#f6f6f8" stroke="#555" stroke-width="1.2"/><rect x="1111.3" y="1096.5" width="19.5" height="14.5" fill="#92b2e2" stroke="#445" stroke-width="1"/><rect x="1118" y="1114" width="6" height="3" fill="#ddd"/><rect x="1114" y="1117" width="14" height="2.5" rx="1.2" fill="#eee" stroke="#555" stroke-width="0.8"/><path d="M1138.4,1102.2 L1153.3,1102.2 L1145.8,1111.6 Z" fill="#2a2a2a"/><rect x="1161" y="1094" width="24.8" height="25.3" fill="url(#ngrid)"/><rect x="1161" y="1094" width="24.8" height="25.3" fill="url(#ngridfade)" stroke="#444" stroke-width="1"/><path d="M1191.2,1102.2 L1206.2,1102.2 L1198.7,1111.6 Z" fill="#2a2a2a"/></svg>
</body></html>
